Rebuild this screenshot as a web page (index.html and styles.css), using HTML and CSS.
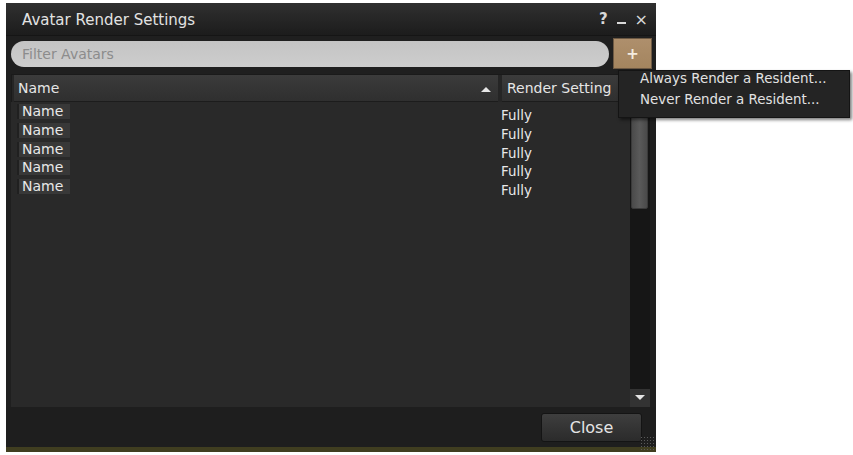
FILE: index.html
```html
<!DOCTYPE html>
<html lang="en">
<head>
    <meta charset="UTF-8">
    <title>Avatar Render Settings</title>
    <link rel="stylesheet" href="styles.css">
</head>
<body>
    <div class="floater">
        <div class="title-bar">
            <span class="title">Avatar Render Settings</span>
            <div class="title-buttons">
                <span class="tb-help">?</span>
                <span class="tb-min"></span>
                <span class="tb-close">&#215;</span>
            </div>
        </div>
        <div class="filter-row">
            <input type="text" class="filter-input" placeholder="Filter Avatars">
            <button class="add-btn">+</button>
        </div>
        <div class="list-panel">
            <div class="list-main">
                <div class="list-header">
                    <div class="col-name">Name <span class="sort-arrow"></span></div>
                    <div class="col-setting">Render Setting</div>
                </div>
                <div class="list-rows">
                    <div class="row"><span class="name-chip">Name</span><span class="setting">Fully</span></div>
                    <div class="row"><span class="name-chip">Name</span><span class="setting">Fully</span></div>
                    <div class="row"><span class="name-chip">Name</span><span class="setting">Fully</span></div>
                    <div class="row"><span class="name-chip">Name</span><span class="setting">Fully</span></div>
                    <div class="row"><span class="name-chip">Name</span><span class="setting">Fully</span></div>
                </div>
            </div>
            <div class="scrollbar">
                <div class="scroll-track">
                    <div class="scroll-thumb"></div>
                </div>
                <div class="scroll-down"></div>
            </div>
        </div>
        <div class="footer">
            <button class="close-btn">Close</button>
        </div>
        <div class="resize-grip"></div>
    </div>

    <div class="context-menu">
        <div class="menu-item">Always Render a Resident...</div>
        <div class="menu-item">Never Render a Resident...</div>
    </div>
</body>
</html>
```

FILE: styles.css
```css
body {
    margin: 0;
    background: #ffffff;
    font-family: 'DejaVu Sans', 'Liberation Sans', sans-serif;
    position: relative;
    height: 455px;
    overflow: hidden;
}

.floater {
    position: relative;
    margin: 3px 0 0 6px;
    width: 650px;
    height: 444px;
    background: #1f1f1f;
    border-bottom: 5px solid #403e20;
    display: flex;
    flex-direction: column;
}

.title-bar {
    height: 32px;
    background: linear-gradient(to bottom, #303030, #1c1c1c);
    display: flex;
    align-items: center;
    justify-content: space-between;
    padding: 0 8px 0 16px;
    border-bottom: 1px solid #151515;
}

.title {
    color: #e2e2e2;
    font-size: 15px;
    margin-top: 1px;
}

.title-buttons {
    display: flex;
    align-items: center;
    gap: 9px;
    color: #d8d8d8;
}

.tb-help {
    font-size: 15px;
    font-weight: bold;
}

.tb-min {
    width: 9px;
    height: 2px;
    background: #d8d8d8;
    margin-top: 8px;
}

.tb-close {
    font-size: 16px;
}

.filter-row {
    display: flex;
    align-items: center;
    gap: 4px;
    padding: 1px 4px 0 5px;
    height: 33px;
}

.filter-input {
    flex: 1;
    height: 26px;
    box-sizing: border-box;
    border: none;
    border-radius: 13px;
    background: linear-gradient(to bottom, #c4c4c4, #cdcdcd);
    padding: 0 11px;
    font-family: inherit;
    font-size: 14px;
    color: #333;
    outline: none;
}

.filter-input::placeholder {
    color: #8c8c8c;
}

.add-btn {
    width: 39px;
    height: 31px;
    border: 1px solid #6e5a44;
    background: linear-gradient(to bottom, #ae8f6c, #a4855f);
    color: #f4ece0;
    font-family: inherit;
    font-size: 15px;
    font-weight: bold;
    padding: 0;
}

.list-panel {
    flex: 1;
    display: flex;
    margin: 4px 6px 0 5px;
    background: #292929;
}

.list-main {
    flex: 1;
    display: flex;
    flex-direction: column;
}

.list-header {
    display: flex;
    height: 27px;
    border-top: 1px solid #1a1a1a;
    border-left: 1px solid #1a1a1a;
    gap: 4px;
    padding-left: 2px;
    background: #252525;
}

.col-name,
.col-setting {
    display: flex;
    align-items: center;
    background: linear-gradient(to bottom, #3b3b3b, #2f2f2f);
    color: #e6e6e6;
    font-size: 14px;
    border-bottom: 1px solid #1c1c1c;
}

.col-name {
    flex: 1;
    padding-left: 4px;
    position: relative;
}

.sort-arrow {
    position: absolute;
    right: 7px;
    top: 12px;
    width: 0;
    height: 0;
    border-left: 5px solid transparent;
    border-right: 5px solid transparent;
    border-bottom: 5px solid #e6e6e6;
}

.col-setting {
    width: 123px;
    padding-left: 5px;
    white-space: nowrap;
    overflow: hidden;
}

.list-rows {
    padding: 2px 0 0 6px;
}

.row {
    display: flex;
    height: 18.75px;
    position: relative;
}

.name-chip {
    align-self: flex-start;
    background: #383838;
    border-left: 2px solid #202020;
    color: #e8e8e8;
    font-size: 14px;
    line-height: 15px;
    padding: 0 2px 0 3px;
    width: 46px;
}

.setting {
    position: absolute;
    left: 484px;
    top: 4px;
    color: #e8e8e8;
    font-size: 13.4px;
    line-height: 16px;
}

.scrollbar {
    width: 20px;
    display: flex;
    flex-direction: column;
    padding-top: 27px;
    background: #252525;
}

.scroll-track {
    flex: 1;
    background: #161616;
    padding: 14px 2px 0 1px;
}

.scroll-thumb {
    height: 92px;
    background: linear-gradient(to right, #4a4a4a, #5a5a5a 50%, #4a4a4a);
    border: 1px solid #3a3a3a;
    border-radius: 2px;
}

.scroll-down {
    height: 18px;
    background: #333;
    position: relative;
}

.scroll-down::after {
    content: '';
    position: absolute;
    left: 5px;
    top: 6px;
    border-left: 5px solid transparent;
    border-right: 5px solid transparent;
    border-top: 5px solid #e6e6e6;
}

.footer {
    height: 40px;
    display: flex;
    align-items: center;
    justify-content: flex-end;
    padding-right: 14px;
    background: #1e1e1e;
}

.close-btn {
    width: 101px;
    height: 29px;
    border: 1px solid #141414;
    border-radius: 3px;
    background: linear-gradient(to bottom, #3e3e3e, #2b2b2b);
    color: #e4e4e4;
    font-family: inherit;
    font-size: 16px;
    padding: 0;
}

.resize-grip {
    position: absolute;
    right: 0;
    bottom: -5px;
    width: 16px;
    height: 16px;
    background-image: radial-gradient(#5a5a5a 40%, transparent 45%);
    background-size: 3px 3px;
}

.context-menu {
    position: absolute;
    left: 618px;
    top: 70px;
    width: 230px;
    background: #242424;
    border: 1px solid #141414;
    box-shadow: 2px 2px 3px rgba(0, 0, 0, 0.5);
    padding: 0 0 4px;
}

.menu-item {
    color: #e2e2e2;
    font-size: 13.4px;
    line-height: 16px;
    padding: 0 0 5px 21px;
}
```
